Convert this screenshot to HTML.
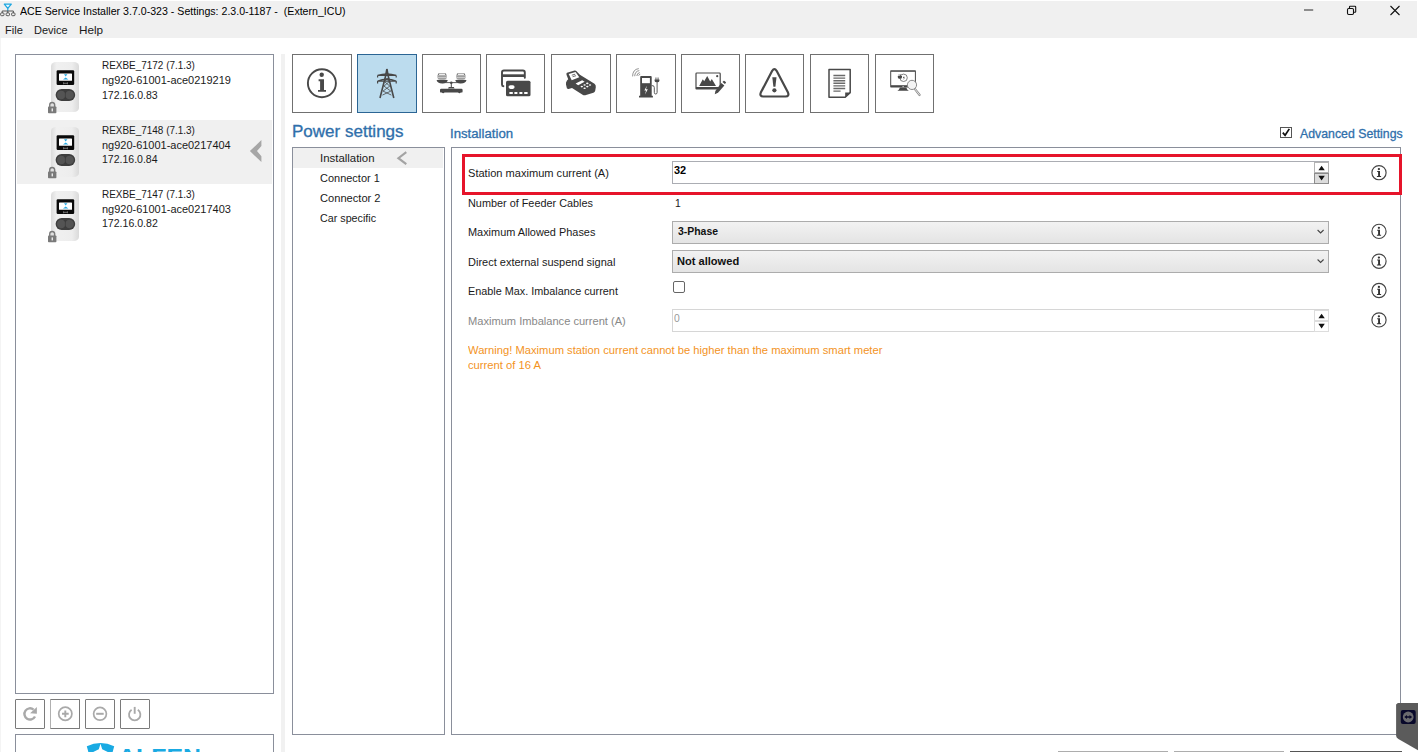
<!DOCTYPE html>
<html lang="en">
<head>
<meta charset="utf-8">
<title>ACE Service Installer</title>
<style>
html,body{margin:0;padding:0;}
body{width:1418px;height:752px;overflow:hidden;background:#fff;position:relative;
 font-family:"Liberation Sans",sans-serif;font-size:11.5px;color:#1a1a1a;}
.abs{position:absolute;}
.t{position:absolute;white-space:nowrap;line-height:16px;height:16px;transform-origin:0 50%;}
.box{position:absolute;box-sizing:border-box;border:1px solid #8a8f9b;background:#fff;}
.tb{position:absolute;box-sizing:border-box;border:1px solid #707070;background:#fff;top:54px;width:59.500px;height:59px;}
.tb svg{position:absolute;left:0;top:0;}
.sb{position:absolute;box-sizing:border-box;border:1px solid #7a7a7a;border-radius:1px;background:#fff;top:699px;width:30px;height:30px;}
.blue{color:#2f6fab;-webkit-text-stroke:.3px #2f6fab;}
.lbl{left:468px;}
.inp{position:absolute;box-sizing:border-box;left:672px;width:657px;height:23px;border:1px solid #abadb3;background:#fff;}
.cmb{position:absolute;box-sizing:border-box;left:672px;width:657px;height:23px;border:1px solid #acacac;
 background:linear-gradient(#f2f2f2,#e4e4e4);}
.b{font-weight:bold;}
</style>
</head>
<body>
<!-- title + menu bar -->
<div class="abs" id="chrome" style="left:0;top:1px;width:1417px;height:37px;background:#f0f0f0;"></div>
<svg class="abs" style="left:0;top:0" width="17" height="18" viewBox="0 0 17 18">
 <path d="M4.300 4.200h7l-3.500 4.200z" fill="#e8f7fd" stroke="#1ea7e1" stroke-width="1.300" stroke-linejoin="round"/>
 <path d="M7.800 8.400v2.600" stroke="#1ea7e1" stroke-width="1.200"/>
 <path d="M2.200 13v-2h11.200v2M7.800 11v2" fill="none" stroke="#555" stroke-width="1"/>
 <rect x=".6" y="12.900" width="3.400" height="2.800" rx=".9" fill="none" stroke="#555" stroke-width="1"/>
 <rect x="6.100" y="12.900" width="3.400" height="2.800" rx=".9" fill="none" stroke="#555" stroke-width="1"/>
 <rect x="11.600" y="12.900" width="3.400" height="2.800" rx=".9" fill="none" stroke="#555" stroke-width="1"/>
</svg>
<div class="t" id="title" style="left:20.00px;top:3.00px;color:#000;transform:scaleX(0.9218);">ACE Service Installer 3.7.0-323 - Settings: 2.3.0-1187 -&nbsp; (Extern_ICU)</div>
<div class="t" id="m1" style="left:4.63px;top:22.00px;transform:scaleX(0.9630);">File</div>
<div class="t" id="m2" style="left:33.64px;top:22.00px;transform:scaleX(0.9554);">Device</div>
<div class="t" id="m3" style="left:78.58px;top:22.00px;transform:scaleX(1.0199);">Help</div>
<!-- window buttons -->
<svg class="abs" style="left:1290px;top:0" width="128" height="22" viewBox="0 0 128 22">
 <path d="M14 10h9.200" stroke="#7a7a7a" stroke-width="1.700" fill="none"/>
 <rect x="57.5" y="8.5" width="6" height="6" rx="1.2" fill="none" stroke="#111" stroke-width="1.1"/>
 <path d="M59.5 8.3v-1.4q0-.6.6-.6h4.8q.8 0 .8.8v4.6q0 .6-.6.6h-1.4" fill="none" stroke="#111" stroke-width="1.1"/>
 <path d="M100.5 6l9 9M109.5 6l-9 9" stroke="#111" stroke-width="1.1" fill="none"/>
</svg>

<!-- splitter -->
<div class="abs" style="left:281px;top:54px;width:4px;height:698px;background:#f1f1f1;"></div>
<div class="abs" style="left:0;top:38px;width:1px;height:714px;background:#f4f4f4;"></div>

<!-- device list -->
<div class="box" id="devlist" style="left:15px;top:54px;width:259px;height:640px;"></div>
<div class="abs" style="left:17px;top:120px;width:255px;height:64px;background:#f0f0f0;"></div>

<!-- devices -->
<svg class="abs" style="left:40px;top:54px" width="60" height="66" viewBox="0 0 60 66">
 <defs><linearGradient id="g0" x1="0" x2="1" y1="0" y2="0"><stop offset="0" stop-color="#dcdcdc"/><stop offset="0.2" stop-color="#f0f0f0"/><stop offset="0.75" stop-color="#ededed"/><stop offset="1" stop-color="#dadada"/></linearGradient></defs>
 <rect x="11" y="8" width="28" height="50" rx="5" ry="4" fill="url(#g0)"/>
 <rect x="16.6" y="16.3" width="17.6" height="14.6" rx="1.2" fill="#0a0a0a"/>
 <rect x="19" y="19.4" width="13" height="7.4" rx=".6" fill="#fff"/>
 <path d="M24 20.3h3.4l-1.7 2.2zM23 25.6l2.7-2.2 2.7 2.2z" fill="#29a9e1"/>
 <path d="M23.6 28.3v2M27.4 28.3v2M23.6 29.3h3.8" stroke="#9a9a9a" stroke-width=".7" fill="none"/>
 <rect x="15.600" y="35" width="19.600" height="12" rx="6" fill="#3e3e3e"/>
 <circle cx="21.300" cy="41" r="4.300" fill="#545454"/><circle cx="29.500" cy="41" r="4.300" fill="#545454"/><path d="M25.400 37v8" stroke="#3a3a3a" stroke-width=".6"/>
 <path d="M9.8 53v-2.2a2.4 2.4 0 0 1 4.8 0V53" fill="none" stroke="#7a7a7a" stroke-width="1.5"/>
 <rect x="8" y="52.4" width="8.4" height="6.8" rx=".8" fill="#7a7a7a"/>
 <rect x="11.6" y="54.4" width="1.3" height="3" fill="#f4f4f4"/>
</svg>
<div class="t dv" id="d0a" style="left:101.72px;top:57.00px;transform:scaleX(0.8647);">REXBE_7172 (7.1.3)</div>
<div class="t dv" id="d0b" style="left:101.78px;top:72.00px;transform:scaleX(0.9552);">ng920-61001-ace0219219</div>
<div class="t dv" id="d0c" style="left:101.72px;top:87.00px;transform:scaleX(0.9174);">172.16.0.83</div>
<svg class="abs" style="left:40px;top:118.5px" width="60" height="66" viewBox="0 0 60 66">
 <defs><linearGradient id="g1" x1="0" x2="1" y1="0" y2="0"><stop offset="0" stop-color="#dcdcdc"/><stop offset="0.2" stop-color="#f0f0f0"/><stop offset="0.75" stop-color="#ededed"/><stop offset="1" stop-color="#dadada"/></linearGradient></defs>
 <rect x="11" y="8" width="28" height="50" rx="5" ry="4" fill="url(#g1)"/>
 <rect x="16.6" y="16.3" width="17.6" height="14.6" rx="1.2" fill="#0a0a0a"/>
 <rect x="19" y="19.4" width="13" height="7.4" rx=".6" fill="#fff"/>
 <path d="M24 20.3h3.4l-1.7 2.2zM23 25.6l2.7-2.2 2.7 2.2z" fill="#29a9e1"/>
 <path d="M23.6 28.3v2M27.4 28.3v2M23.6 29.3h3.8" stroke="#9a9a9a" stroke-width=".7" fill="none"/>
 <rect x="15.600" y="35" width="19.600" height="12" rx="6" fill="#3e3e3e"/>
 <circle cx="21.300" cy="41" r="4.300" fill="#545454"/><circle cx="29.500" cy="41" r="4.300" fill="#545454"/><path d="M25.400 37v8" stroke="#3a3a3a" stroke-width=".6"/>
 <path d="M9.8 53v-2.2a2.4 2.4 0 0 1 4.8 0V53" fill="none" stroke="#7a7a7a" stroke-width="1.5"/>
 <rect x="8" y="52.4" width="8.4" height="6.8" rx=".8" fill="#7a7a7a"/>
 <rect x="11.6" y="54.4" width="1.3" height="3" fill="#f4f4f4"/>
</svg>
<div class="t dv" id="d1a" style="left:101.72px;top:122.00px;transform:scaleX(0.8647);">REXBE_7148 (7.1.3)</div>
<div class="t dv" id="d1b" style="left:101.78px;top:137.00px;transform:scaleX(0.9538);">ng920-61001-ace0217404</div>
<div class="t dv" id="d1c" style="left:101.72px;top:151.00px;transform:scaleX(0.9143);">172.16.0.84</div>
<svg class="abs" style="left:40px;top:183px" width="60" height="66" viewBox="0 0 60 66">
 <defs><linearGradient id="g2" x1="0" x2="1" y1="0" y2="0"><stop offset="0" stop-color="#dcdcdc"/><stop offset="0.2" stop-color="#f0f0f0"/><stop offset="0.75" stop-color="#ededed"/><stop offset="1" stop-color="#dadada"/></linearGradient></defs>
 <rect x="11" y="8" width="28" height="50" rx="5" ry="4" fill="url(#g2)"/>
 <rect x="16.6" y="16.3" width="17.6" height="14.6" rx="1.2" fill="#0a0a0a"/>
 <rect x="19" y="19.4" width="13" height="7.4" rx=".6" fill="#fff"/>
 <path d="M24 20.3h3.4l-1.7 2.2zM23 25.6l2.7-2.2 2.7 2.2z" fill="#29a9e1"/>
 <path d="M23.6 28.3v2M27.4 28.3v2M23.6 29.3h3.8" stroke="#9a9a9a" stroke-width=".7" fill="none"/>
 <rect x="15.600" y="35" width="19.600" height="12" rx="6" fill="#3e3e3e"/>
 <circle cx="21.300" cy="41" r="4.300" fill="#545454"/><circle cx="29.500" cy="41" r="4.300" fill="#545454"/><path d="M25.400 37v8" stroke="#3a3a3a" stroke-width=".6"/>
 <path d="M9.8 53v-2.2a2.4 2.4 0 0 1 4.8 0V53" fill="none" stroke="#7a7a7a" stroke-width="1.5"/>
 <rect x="8" y="52.4" width="8.4" height="6.8" rx=".8" fill="#7a7a7a"/>
 <rect x="11.6" y="54.4" width="1.3" height="3" fill="#f4f4f4"/>
</svg>
<div class="t dv" id="d2a" style="left:101.72px;top:186.00px;transform:scaleX(0.8647);">REXBE_7147 (7.1.3)</div>
<div class="t dv" id="d2b" style="left:101.78px;top:201.00px;transform:scaleX(0.9552);">ng920-61001-ace0217403</div>
<div class="t dv" id="d2c" style="left:101.72px;top:215.00px;transform:scaleX(0.9182);">172.16.0.82</div>
<svg class="abs" style="left:245px;top:135px" width="20" height="32" viewBox="245 135 20 32"><path d="M261.400 140L249.900 151.100l11.500 11v-5.800L257 151.100l4.400-5.200z" fill="#a6a6a6"/></svg>

<!-- toolbar -->
<div class="tb" style="left:292px;width:60px;"></div>
<div class="tb" style="left:357px;width:60px;background:#bcdcee;border-color:#2b6594;"></div>
<div class="tb" style="left:422px;width:59px;"></div>
<div class="tb" style="left:486px;width:59px;"></div>
<div class="tb" style="left:551px;width:60px;"></div>
<div class="tb" style="left:616px;width:60px;"></div>
<div class="tb" style="left:681px;width:59px;"></div>
<div class="tb" style="left:745px;width:59px;"></div>
<div class="tb" style="left:810px;width:59px;"></div>
<div class="tb" style="left:875px;width:59px;"></div>
<svg class="abs" style="left:0;top:0" width="1418" height="120" viewBox="0 0 1418 120">
<circle cx="321.9" cy="83.2" r="14" fill="none" stroke="#484848" stroke-width="1.9"/>
<circle cx="321.7" cy="74.8" r="2.2" fill="#484848"/>
<path d="M318.6 79.3h5.4v10.6h2v1.9h-8v-1.9h2.1v-8.6h-1.5z" fill="#484848"/>
<g fill="none" stroke="#484848" stroke-width="1.1" stroke-linejoin="round">
<path d="M386.900 69l-1.300 7-5.600 22M386.900 69l1.300 7 5.600 22" stroke-width="1.600"/>
<path d="M377.6 75.4q9.3-3.2 18.6 0M377.6 75.4h18.6M377.6 75.4v2M396.2 75.4v2" stroke-width="1.2"/>
<path d="M377.6 81q9.3-3.6 18.6 0M378 81.2h18M377.6 81v2.6M396.2 81v2.6" stroke-width="1.2"/>
<path d="M385.2 77.5l4.2 4-5.4 4.6 6.8 5-8.4 4M388.6 77.5l-4.2 4 5.4 4.6-6.8 5 8.400 4" stroke-width=".8"/>
</g>
<g fill="#484848">
<rect x="437.6" y="73" width="9" height="7" rx="2.4" fill="#777"/><rect x="456.4" y="73" width="9" height="7" rx="2.4" fill="#777"/>
<rect x="439" y="73.6" width="6.200" height="1.500" rx=".7" fill="#eee"/><rect x="457.8" y="73.600" width="6.2" height="1.5" rx=".7" fill="#eee"/>
<path d="M437.600 75.900h9M437.600 77.500h9M437.600 79.100h9M456.400 75.900h9M456.400 77.500h9M456.400 79.100h9" stroke="#d8d8d8" stroke-width=".6" fill="none"/>
<path d="M437.600 75.900h9M437.600 77.500h9M437.600 79.100h9M456.400 75.900h9M456.400 77.500h9M456.400 79.100h9" stroke="#d8d8d8" stroke-width=".6" fill="none"/>
<path d="M436.600 80h11.200q-.6 3.400-5.600 3.400t-5.600-3.400zM455.300 80h11.200q-.6 3.400-5.600 3.400t-5.600-3.400z"/>
<path d="M442 82.200h18.800v.9h-18.800z"/><circle cx="451.300" cy="82.700" r="1.300"/>
<path d="M450.800 83h1v4.200h-1zM448.800 87h5l.8 1.400h-6.600z"/>
<path d="M441.200 88.800h20.200q1.200 0 1.200 1.200v1.400q0 1.200-1.200 1.200h-.6q-.6.700-1.400.7t-1.300-.7h-13.600q-.5.700-1.300.7t-1.400-.7h-.6q-1.200 0-1.200-1.200v-1.400q0-1.200 1.200-1.200z"/>
</g>
<path d="M503.400 86.200q-1.400-.2-1.400-1.800v-12q0-1.900 1.900-1.900h19q1.900 0 1.900 1.900v5.400" fill="none" stroke="#484848" stroke-width="1.900" stroke-linecap="round"/>
<path d="M502 74.300h22.800v2.700h-22.800z" fill="#484848"/>
<rect x="506" y="80.700" width="24.500" height="15.600" rx="1.600" fill="#484848"/>
<rect x="508.600" y="85.300" width="6" height="3.600" rx="1.800" fill="#fff"/>
<path d="M509.400 92h3.400v2h-3.400zM514.400 92h3v2h-3zM519.400 92h3v2h-3zM524.200 92h3.400v2h-3.400z" fill="#fff"/>
<path d="M567 72.800l7.600-2.200q1-.2 1.700.4l3.600 3.800 14.600 9q1.600 1.200 1.300 3.400l-.6 3.600q-.4 1.400-1.800 2l-8.200 2.400q-1.400.3-2.600-.5l-10.600-6.600-3.400.8q-1 .2-1.700-.7l-.9-3.600q-.4-2.400 1-4.200l1.200-1.200-1.700-4.400q-.4-1.500.500-2z" fill="#484848"/>
<path d="M568.700 74l6.800-2 3.800 5.200-7.600 3z" fill="#fff"/>
<path d="M571.800 75.200l3.400-1M572.600 76.700l3.400-1" stroke="#484848" stroke-width=".8"/>
<path d="M575.600 83.600l6.600-3.400 2.400 1.500-6.400 3.600z" fill="#fff"/>
<g fill="#fff"><ellipse cx="587.300" cy="83.400" rx="1.200" ry=".8"/><ellipse cx="590" cy="85" rx="1.200" ry=".8"/><ellipse cx="584.600" cy="85" rx="1.200" ry=".8"/><ellipse cx="587.300" cy="86.600" rx="1.200" ry=".8"/><ellipse cx="581.800" cy="86.600" rx="1.200" ry=".8"/><ellipse cx="584.600" cy="88.300" rx="1.200" ry=".8"/></g>
<path d="M640.200 77q0-.9.900-.9h9.700q.9 0 .9.900v18.700h1.200v1.700h-13.900v-1.700h1.200z" fill="#484848"/>
<rect x="642" y="78" width="7.900" height="5.200" fill="#fff"/>
<path d="M646.800 85.800l-2.400 4.600h1.700l-1.100 4 2.800-5.200h-1.800z" fill="#fff"/>
<path d="M651.700 85.600q2.600-.4 2.600 2v4.800q0 1.600 1.400 1.600t1.400-1.600v-10.400" fill="none" stroke="#484848" stroke-width=".9"/>
<path d="M654.600 79.400h4.800v1.500q0 1.400-2.400 1.400t-2.400-1.400zM655.500 77.600h.9v2h-.9zM657.600 77.600h.9v2h-.9z" fill="#484848"/>
<path d="M632.600 76.400q0-7 6.200-7.800M634.700 76.200q.2-5 4.600-5.600M636.800 76q.3-3 3-3.400M638.600 75.600q.4-1.200 1.600-1.300" fill="none" stroke="#777" stroke-width=".8"/>
<rect x="696" y="73" width="24.200" height="14.600" rx=".8" fill="#fff" stroke="#484848" stroke-width="1.200"/>
<path d="M695.400 87.200h22.500v2.200h-21.500q-1 0-1-1z" fill="#484848"/>
<path d="M699.200 86l3.600-6.800 1.400 2 3-5.200 3 5.400 1.600-2.400 4.200 7z" fill="#484848"/>
<circle cx="717.200" cy="76.200" r="1.100" fill="#484848"/>
<path d="M721.200 83l3.200 2.400-6.400 7.400-3.200 1.500.6-3.400z" fill="#484848"/><path d="M722.500 82l1-1q.5-.4 1 0l1.300 1q.4.400 0 .9l-.9 1z" fill="#484848"/>
<path d="M772.200 70.800q2.200-3.300 4.400 0l11.400 21.800q1.500 3.600-2.400 3.900h-22.400q-3.900-.3-2.400-3.900z" fill="none" stroke="#484848" stroke-width="2.200" stroke-linejoin="round"/>
<path d="M772.300 77.200h4.200l-1.100 9.600h-2z" fill="#484848"/><circle cx="774.400" cy="90.300" r="2.100" fill="#484848"/>
<path d="M829 69.600h21.200v23l-5 4.600h-16.200z" fill="#fff" stroke="#484848" stroke-width="1.500" stroke-linejoin="round"/>
<path d="M850.200 92.600h-5v4.600z" fill="#484848"/>
<path d="M833.400 75.500h11.800M833.400 78.100h11.800M833.400 80.700h11.800M833.400 83.300h11.800M833.400 85.900h11.800M833.400 88.500h11.800M833.400 91.100h7.200" stroke="#6a6a6a" stroke-width="1.400"/>
<path d="M890.200 71q0-.7.700-.7h24.300q.7 0 .7.700v15.800q0 .7-.7.700h-24.300q-.7 0-.7-.7z" fill="#484848"/>
<rect x="891.200" y="71.800" width="23.700" height="13.400" fill="#fff"/>
<path d="M900 87.400h6.200l1.400 2.600q1 .2 1 .8h-11q0-.6 1-.8z" fill="#484848"/><circle cx="903.100" cy="86.600" r=".6" fill="#fff"/>
<circle cx="903.600" cy="77.800" r="3.700" fill="none" stroke="#666" stroke-width=".8"/>
<path d="M897.800 76h4.200v1.200q0 1.600-2.100 1.600t-2.100-1.600zM898.700 74.200h.7v2h-.7zM900.400 74.200h.7v2h-.7z" fill="#484848"/>
<path d="M904.200 75.800l-1.300 2.200h1l-.6 2 1.700-2.600h-1z" fill="#484848"/>
<path d="M914.600 88.600l5 6.400" stroke="#888" stroke-width="2.200" stroke-linecap="round"/><path d="M914.600 88.600l5 6.400" stroke="#eee" stroke-width=".9" stroke-linecap="round"/>
<circle cx="912" cy="84.900" r="4.600" fill="#f4f4f4" stroke="#8a8a8a" stroke-width="1"/>
</svg>

<!-- nav + content panels -->
<div class="box" id="nav" style="left:292px;top:147px;width:153px;height:588px;"></div>
<div class="abs" style="left:293px;top:148px;width:150px;height:20px;background:#f0f0f0;"></div>
<div class="box" id="content" style="left:451px;top:147px;width:950px;height:588px;"></div>

<!-- headings -->
<div class="t blue" id="h1" style="left:291.97px;top:120.00px;font-size:16px;line-height:24px;height:24px;transform:scaleX(1.0631);">Power settings</div>
<div class="t blue" id="h2" style="left:449.99px;top:126.00px;font-size:12.5px;transform:scaleX(1.0552);">Installation</div>
<div class="abs" style="left:1280px;top:127px;width:10px;height:9px;border:1px solid #555;background:#fff;"></div>
<svg class="abs" style="left:1280px;top:126px" width="13" height="13" viewBox="0 0 13 13"><path d="M2.800 6.600l2.300 2.700 4.200-6.400" fill="none" stroke="#111" stroke-width="1.700"/></svg>
<div class="t blue" id="adv" style="left:1299.50px;top:126.00px;font-size:12.5px;transform:scaleX(0.9847);">Advanced Settings</div>

<!-- nav items -->
<div class="t" id="n1" style="left:319.71px;top:150.00px;transform:scaleX(0.9919);">Installation</div>
<div class="t" id="n2" style="left:320.23px;top:170.00px;transform:scaleX(0.9545);">Connector 1</div>
<div class="t" id="n3" style="left:320.22px;top:190.00px;transform:scaleX(0.9666);">Connector 2</div>
<div class="t" id="n4" style="left:320.24px;top:210.00px;transform:scaleX(0.9329);">Car specific</div>
<svg class="abs" style="left:396px;top:151px" width="12" height="14" viewBox="0 0 12 14"><path d="M10.300 1.200L2.400 7.200l7.900 6" fill="none" stroke="#a3a3a3" stroke-width="2.100"/></svg>

<!-- form -->
<div class="abs" style="left:462px;top:154px;width:934px;height:35px;border:3px solid #e6142a;"></div>
<div class="t lbl" id="l1" style="top:165.00px;transform:scaleX(0.9627);">Station maximum current (A)</div>
<div class="t lbl" id="l2" style="top:195.00px;transform:scaleX(0.9446);">Number of Feeder Cables</div>
<div class="t lbl" id="l3" style="top:224.00px;transform:scaleX(0.9490);">Maximum Allowed Phases</div>
<div class="t lbl" id="l4" style="top:254.00px;transform:scaleX(0.9564);">Direct external suspend signal</div>
<div class="t lbl" id="l5" style="top:283.00px;transform:scaleX(0.9417);">Enable Max. Imbalance current</div>
<div class="t lbl" id="l6" style="top:313.00px;color:#888;transform:scaleX(0.9644);">Maximum Imbalance current (A)</div>

<div class="inp" style="top:161px;"></div>
<div class="t b" id="v1" style="left:674.26px;top:162.00px;color:#000;transform:scaleX(0.9507);">32</div>
<div class="t" id="v2" style="left:674.53px;top:195.00px;transform:scaleX(0.9000);">1</div>
<div class="cmb" style="top:221px;"></div>
<div class="t b" id="v3" style="left:677.77px;top:223.00px;color:#111;transform:scaleX(0.9078);">3-Phase</div>
<div class="cmb" style="top:250px;"></div>
<div class="t b" id="v4" style="left:677.28px;top:253.00px;color:#111;transform:scaleX(0.9634);">Not allowed</div>
<div class="abs" style="left:672.500px;top:280.500px;width:10.500px;height:10px;border:1px solid #666;border-radius:2px;background:#fff;"></div>
<div class="inp" style="top:309px;border-color:#d6d6d6;"></div>
<div class="t" id="v6" style="left:674.34px;top:310.00px;color:#999;transform:scaleX(0.9000);">0</div>

<!-- spinners / combo arrows / info icons -->
<svg class="abs" style="left:1300px;top:150px" width="100" height="190" viewBox="1300 150 100 190">
 <g fill="#fff" stroke="#b4b4b4" stroke-width="1">
  <rect x="1314.500" y="162.500" width="14" height="10"/><rect x="1314.500" y="173.500" width="14" height="10" fill="#dcdcdc" stroke="#8c8c8c"/>
  <rect x="1314.500" y="310.500" width="14" height="10" stroke="#ddd"/><rect x="1314.500" y="321.500" width="14" height="10" stroke="#ddd"/>
 </g>
 <g fill="#111">
  <path d="M1318.400 170.300h6.400l-3.200-4.600zM1318.400 175.800h6.400l-3.200 4.600z"/>
  <path d="M1318.400 318.300h6.400l-3.200-4.600zM1318.400 323.800h6.400l-3.200 4.600z"/>
 </g>
 <path d="M1317.600 230l3 3 3-3M1317.600 259.500l3 3 3-3" fill="none" stroke="#444" stroke-width="1.100"/>
</svg>
<svg class="abs" style="left:1368px;top:160px" width="24" height="172" viewBox="1368 160 24 172">
<circle cx="1379" cy="172.7" r="7.100" fill="#fff" stroke="#444" stroke-width="1.150"/><circle cx="1378.900" cy="169.1" r="1.150" fill="#333"/><path d="M1377.200 171.0h2.800v5.100h1.100v1h-4.200v-1h1.200v-4.100h-.9z" fill="#333"/>
<circle cx="1379" cy="231.4" r="7.100" fill="#fff" stroke="#444" stroke-width="1.150"/><circle cx="1378.900" cy="227.8" r="1.150" fill="#333"/><path d="M1377.200 229.7h2.800v5.100h1.100v1h-4.200v-1h1.200v-4.100h-.9z" fill="#333"/>
<circle cx="1379" cy="261.2" r="7.100" fill="#fff" stroke="#444" stroke-width="1.150"/><circle cx="1378.900" cy="257.6" r="1.150" fill="#333"/><path d="M1377.200 259.5h2.800v5.100h1.100v1h-4.200v-1h1.200v-4.100h-.9z" fill="#333"/>
<circle cx="1379" cy="290.5" r="7.100" fill="#fff" stroke="#444" stroke-width="1.150"/><circle cx="1378.900" cy="286.9" r="1.150" fill="#333"/><path d="M1377.200 288.8h2.800v5.100h1.100v1h-4.200v-1h1.200v-4.100h-.9z" fill="#333"/>
<circle cx="1379" cy="319.9" r="7.100" fill="#fff" stroke="#444" stroke-width="1.150"/><circle cx="1378.900" cy="316.3" r="1.150" fill="#333"/><path d="M1377.200 318.2h2.800v5.100h1.100v1h-4.200v-1h1.200v-4.100h-.9z" fill="#333"/>
</svg>
<div class="t" id="w1" style="left:467.95px;top:342.00px;color:#f3931e;transform:scaleX(0.9731);">Warning! Maximum station current cannot be higher than the maximum smart meter</div>
<div class="t" id="w2" style="left:467.56px;top:357.00px;color:#f3931e;transform:scaleX(0.9765);">current of 16 A</div>

<!-- bottom-left buttons -->
<div class="sb" style="left:15px;"></div><div class="sb" style="left:50px;border-left-color:#b0b0b0;"></div><div class="sb" style="left:85px;"></div><div class="sb" style="left:120px;"></div>
<svg class="abs" style="left:10px;top:695px" width="150" height="40" viewBox="10 695 150 40">
 <path d="M33.600 709.600a5.600 5.600 0 1 0 1.400 6.900" fill="none" stroke="#a9a9a9" stroke-width="2.400"/>
 <path d="M36.900 706.900v6.900l-6.800-.5z" fill="#a9a9a9"/>
 <circle cx="65.300" cy="713.800" r="6.600" fill="none" stroke="#a9a9a9" stroke-width="1.700"/>
 <path d="M62 713.800h6.700M65.300 710.500v6.700" stroke="#a9a9a9" stroke-width="1.900" fill="none"/>
 <circle cx="100" cy="713.800" r="6.400" fill="none" stroke="#a9a9a9" stroke-width="1.700"/>
 <path d="M96.200 713.800h7.500" stroke="#a9a9a9" stroke-width="2" fill="none"/>
 <path d="M131.600 709.800a5.700 5.700 0 1 0 6.200 0" fill="none" stroke="#a9a9a9" stroke-width="1.800"/>
 <path d="M134.700 706.900v6.900" stroke="#a9a9a9" stroke-width="1.900"/>
</svg>
<!-- logo panel -->
<div class="box" style="left:15px;top:734px;width:259px;height:30px;"></div>
<svg class="abs" style="left:80px;top:738px" width="40" height="14" viewBox="80 738 40 14">
 <path d="M86.800 746.200q13.700-6.600 27.400 0l-1.600 6h-24.200z" fill="#19aae3"/>
 <path d="M100.500 743.800l1.700 5.400 5.600 2.800h-14.600l5.600-2.800z" fill="#fff"/>
</svg>
<div class="t b" id="logo" style="left:117.61px;top:745.00px;font-size:22px;line-height:24px;height:24px;color:#19aae3;transform:scaleX(1.1324);">ALFEN</div>
<!-- bottom-right buttons -->
<div class="abs" style="left:1058px;top:751px;width:110px;height:10px;border:1px solid #adadad;background:#e6e6e6;box-sizing:border-box;"></div>
<div class="abs" style="left:1174px;top:751px;width:110px;height:10px;border:1px solid #adadad;background:#e6e6e6;box-sizing:border-box;"></div>
<div class="abs" style="left:1290px;top:751px;width:112px;height:10px;border:1px solid #555;background:#e6e6e6;box-sizing:border-box;"></div>
<!-- remote widget -->
<svg class="abs" style="left:1390px;top:700px" width="28" height="52" viewBox="1390 700 28 52">
 <path d="M1396.100 704.600l1.800-1.600h20.100v47.200l-19.600-11.200q-2.300-1.400-2.300-3.200z" fill="#5b5b5b"/>
 <rect x="1400.800" y="710" width="14.900" height="14" rx="2" fill="#08082a"/>
 <circle cx="1408.200" cy="717" r="5.400" fill="#6a6a6e"/>
 <path d="M1404.300 717l2.700-2v1.300h2.500v-1.300l2.700 2-2.700 2v-1.300h-2.500v1.300z" fill="#08082a"/>
</svg>

</body>
</html>
